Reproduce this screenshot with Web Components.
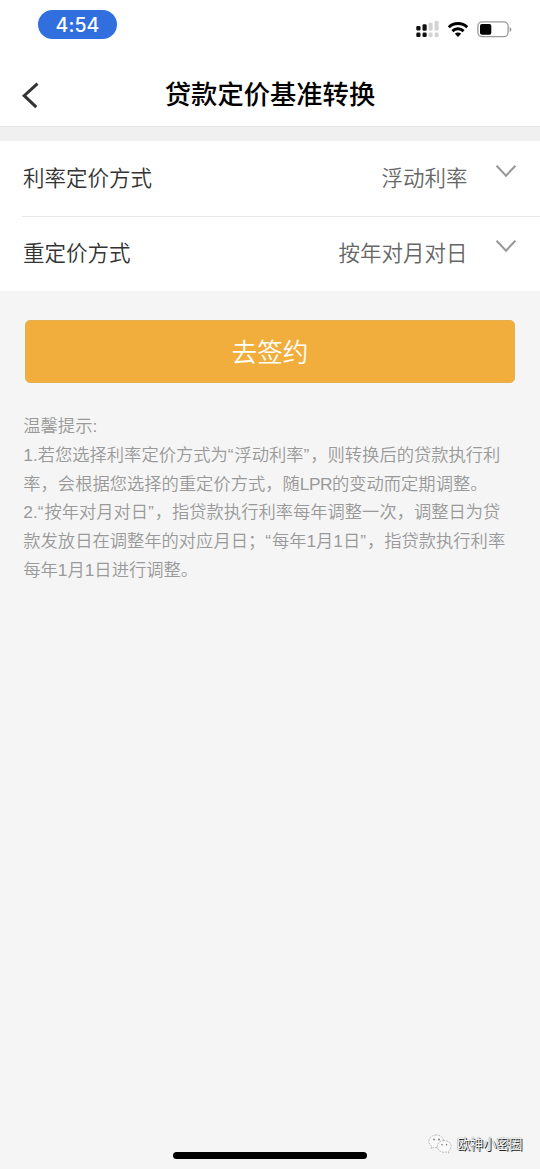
<!DOCTYPE html>
<html lang="zh-CN">
<head>
<meta charset="utf-8">
<title>贷款定价基准转换</title>
<style>
html,body{margin:0;padding:0;background:#f5f5f5}
body{font-family:"Liberation Sans","Noto Sans CJK SC",sans-serif;width:540px;height:1169px;overflow:hidden}
</style>
</head>
<body>
<loan-page></loan-page>
<script>
const define = (name, html) => {
  const t = document.createElement('template');
  t.innerHTML = html;
  customElements.define(name, class extends HTMLElement {
    constructor() {
      super();
      this.attachShadow({mode: 'open'}).appendChild(t.content.cloneNode(true));
    }
  });
};

define('status-bar', `
<style>
:host{display:flex;align-items:flex-start;justify-content:space-between;height:63px;background:#fff;box-sizing:border-box;padding:10px 28px 0 38px}
.time{width:79px;height:29px;border-radius:15px;background:#306fdd;color:#fff;font:500 19.5px/30px Inter,sans-serif;text-align:center;letter-spacing:.1px}
svg{display:block;margin-top:8px}
</style>
<div class="time"><slot></slot></div>
<svg width="97" height="22" viewBox="415 18 97 22">
  <g fill="#111"><rect x="416.3" y="26" width="4.2" height="4.6" rx="1.3"/><rect x="422.5" y="24.3" width="4.2" height="6.4" rx="1.3"/><rect x="416.3" y="32.6" width="4.2" height="4.4" rx="1.3"/><rect x="422.5" y="32.6" width="4.2" height="4.4" rx="1.3"/></g>
  <g fill="#d3d3d3"><rect x="428.6" y="22.8" width="4" height="7.8" rx="1.2"/><rect x="434.6" y="21" width="4" height="9.6" rx="1.2"/><rect x="428.6" y="32.6" width="4" height="4.3" rx="1.2"/><rect x="434.6" y="32.6" width="4" height="4.3" rx="1.2"/></g>
  <g fill="none" stroke="#000" stroke-width="2.9"><path d="M448.8 27.2a13.2 13.2 0 0 1 18.4 0"/><path d="M452.4 31.1a8 8 0 0 1 11.2 0"/></g>
  <path d="M454.9 33.8a4.4 4.4 0 0 1 6.2 0L458 37z" fill="#000"/>
  <rect x="477.9" y="21.9" width="30.2" height="14.8" rx="4.2" fill="none" stroke="#999" stroke-width="1.3"/>
  <rect x="480" y="24" width="11.3" height="10.8" rx="2" fill="#000"/>
  <path d="M509.6 26.9c2.4 1 2.4 4 0 5z" fill="#999"/>
</svg>`);

define('nav-bar', `
<style>
:host{display:grid;grid-template-columns:60px 1fr 60px;align-items:center;height:64px;background:#fff;border-bottom:1px solid #e6e6e6;box-sizing:border-box}
svg{display:block;margin-left:20px}
h1{margin:0 0 3px;text-align:center;font-size:26.3px;font-weight:500;font-family:"Noto Sans CJK SC",sans-serif;line-height:38px;color:#000;white-space:nowrap}
</style>
<svg width="22" height="28" viewBox="0 0 22 28"><path d="M17.5 3L4.2 15 16.3 26.5" transform="translate(0 -.3)" fill="none" stroke="#333" stroke-width="3"/></svg>
<h1><slot></slot></h1>`);

define('select-row', `
<style>
:host{display:flex;align-items:center;height:75px;margin-left:22px;padding:0 23px 0 1px;font-size:21.5px;line-height:32px;font-weight:350;font-family:"Noto Sans CJK SC",sans-serif;color:#333;box-sizing:border-box}
:host([divided]){border-top:1px solid #e8e8e8}
span{margin-bottom:3px}
:host([divided]) span{margin-bottom:5px}
.label{flex:1}
.value{color:#666;margin-right:27.5px}
svg{display:block;margin-top:-16px}
</style>
<span class="label"><slot name="label"></slot></span>
<span class="value"><slot></slot></span>
<svg width="22" height="14" viewBox="0 0 22 14"><path d="M1.6 1.8L11 11.7 20.4 1.8" fill="none" stroke="#999" stroke-width="2.1"/></svg>`);

define('select-list', `
<style>
:host{display:block;margin-top:14px;background:#fff;height:150px}
</style>
<slot></slot>`);

define('primary-button', `
<style>
:host{display:block;margin:29px 25px 0}
button{display:block;width:100%;height:63px;padding:0 0 2px;border:1px solid #e6ae52;border-radius:5px;background:#f2ae3d;color:#fff;font:350 25.6px/59px "Noto Sans CJK SC",sans-serif}
</style>
<button><slot></slot></button>`);

define('tip-text', `
<style>
:host{display:block;margin:29px 0 0 23.3px;font-size:17.3px;line-height:28.8px;font-weight:350;color:#999;white-space:nowrap;font-family:"Liberation Sans","Noto Sans CJK SC",sans-serif}
</style>
<slot></slot>`);

define('account-mark', `
<style>
:host{display:flex;align-items:center;gap:5px;position:absolute;left:428px;top:1132px;height:24px;font:400 13.1px/24px "Noto Sans CJK SC",sans-serif;color:#fff;text-shadow:1px 1px 0 #222,0 0 1px #333}
svg{display:block}
</style>
<svg width="24" height="20" viewBox="0 0 24 20" fill="#fafafa" stroke="#aaa" stroke-width=".8" stroke-dasharray="2 1"><path d="M8.500 1C4.200 1 .8 3.900.8 7.400c0 2 1.200 3.700 3 4.900L3 14.800l2.900-1.500c1 .3 2 .4 3 .4l7-6.700C15.200 3.500 12.200 1 8.500 1z"/><path d="M16.200 6.500c-3.900 0-7 2.600-7 5.900s3.100 5.900 7 5.900c.8 0 1.700-.1 2.500-.4l2.300 1.200-.6-2c1.600-1.100 2.700-2.700 2.700-4.700 0-3.300-3.100-5.900-6.900-5.900z"/><g fill="#777" stroke="none"><circle cx="6" cy="5.500" r=".9"/><circle cx="11" cy="5.500" r=".9"/><circle cx="14" cy="10.800" r=".8"/><circle cx="18.500" cy="10.800" r=".8"/></g></svg>
<span><slot></slot></span>`);

define('home-indicator', `
<style>
:host{display:block;position:absolute;left:173px;top:1152px;width:194px;height:6.5px;border-radius:4px;background:#000}
</style>`);

define('loan-page', `
<style>
:host{display:block;position:relative;width:540px;height:1169px;overflow:hidden;background:linear-gradient(#f0f0f0 141px,#f5f5f5 141px)}
.q{letter-spacing:.9px}
.abbr{letter-spacing:-.5px}
</style>
<status-bar>4:54</status-bar>
<nav-bar>贷款定价基准转换</nav-bar>
<select-list>
  <select-row><span slot="label">利率定价方式</span>浮动利率</select-row>
  <select-row divided><span slot="label">重定价方式</span>按年对月对日</select-row>
</select-list>
<primary-button>去签约</primary-button>
<tip-text>温馨提示:<br>1.若您选择利率定价方式为<span class="q">“</span>浮动利率<span class="q">”</span>，则转换后的贷款执行利<br>率，会根据您选择的重定价方式，随<span class="abbr">LPR</span>的变动而定期调整。<br>2.<span class="q">“</span>按年对月对日<span class="q">”</span>，指贷款执行利率每年调整一次，调整日为贷<br>款发放日在调整年的对应月日；<span class="q">“</span>每年1月1日<span class="q">”</span>，指贷款执行利率<br>每年1月1日进行调整。</tip-text>
<account-mark>欧神小密圈</account-mark>
<home-indicator></home-indicator>`);
</script>
</body>
</html>
